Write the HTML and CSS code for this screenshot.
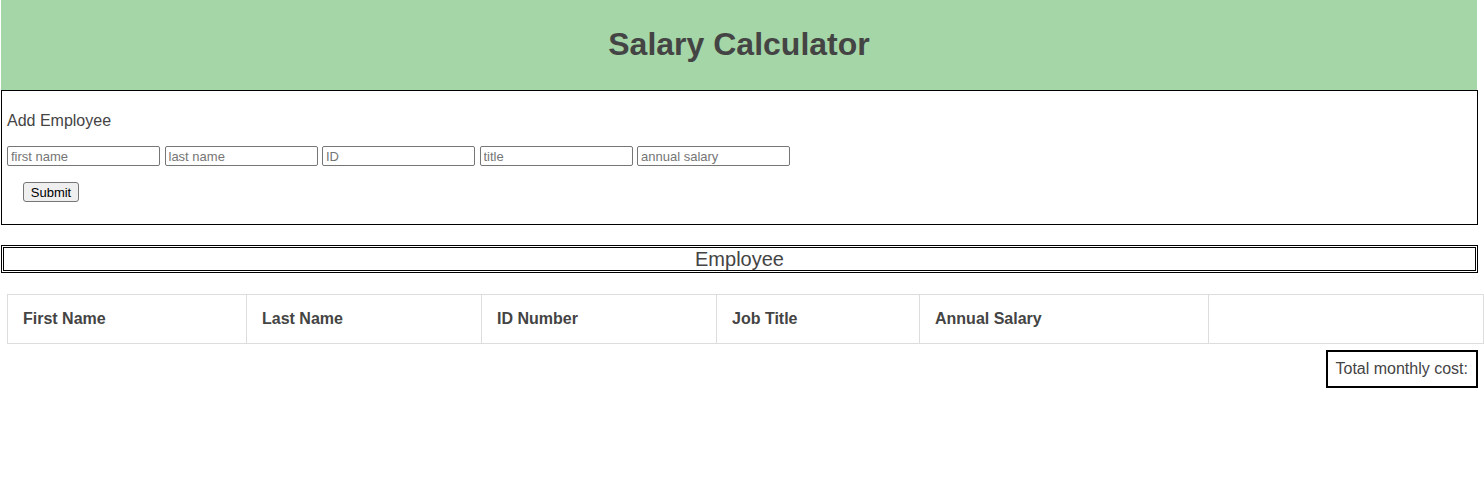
FILE: index.html
```html
<!DOCTYPE html>
<html lang="en">
<head>
<meta charset="utf-8">
<title>Salary Calculator</title>
<link rel="stylesheet" href="styles.css">
</head>
<body>
<div class="page">
  <header class="banner">
    <h1 class="title">Salary Calculator</h1>
  </header>
  <section class="add-box">
    <p class="add-label">Add Employee</p>
    <div class="inputs">
      <input class="field" type="text" placeholder="first name">
      <input class="field" type="text" placeholder="last name">
      <input class="field" type="text" placeholder="ID">
      <input class="field" type="text" placeholder="title">
      <input class="field" type="text" placeholder="annual salary">
    </div>
    <button class="submit" type="button">Submit</button>
  </section>
  <div class="emp-box">Employee</div>
  <table class="emp-table">
    <colgroup>
      <col class="c1"><col class="c2"><col class="c3"><col class="c4"><col class="c5"><col class="c6">
    </colgroup>
    <thead>
      <tr>
        <th>First Name</th>
        <th>Last Name</th>
        <th>ID Number</th>
        <th>Job Title</th>
        <th>Annual Salary</th>
        <th></th>
      </tr>
    </thead>
  </table>
  <div class="total-row">
    <div class="total">Total monthly cost:</div>
  </div>
</div>
</body>
</html>
```

FILE: styles.css
```css
html, body {
  margin: 0;
  padding: 0;
  background: #fff;
}
body {
  font-family: "Liberation Sans", Arial, sans-serif;
  color: #444;
  font-size: 16px;
}
.page {
  margin-left: 1px;
  width: 1477px;
}
.banner {
  background: #a5d6a7;
  height: 90px;
  box-sizing: border-box;
  padding-bottom: 2px;
  display: flex;
  align-items: center;
  justify-content: center;
  width: 1476px;
}
.title {
  margin: 0;
  font-size: 32px;
  font-weight: bold;
  color: #444;
}
.add-box {
  border: 1px solid #000;
  padding: 5px 5px 20px 5px;
  height: 135px;
  box-sizing: border-box;
}
.add-label {
  margin: 16px 0 16px 0;
  line-height: 18px;
}
.inputs {
  display: flex;
  gap: 4.5px;
}
.field {
  width: 153px;
  height: 20px;
  box-sizing: border-box;
  border: 1px solid #767676;
  border-radius: 2px;
  padding: 1px 3px;
  font-family: "Liberation Sans", Arial, sans-serif;
  font-size: 13px;
  color: #000;
  background: #fff;
  margin: 0;
}
.field::placeholder {
  color: #757575;
}
.submit {
  margin: 16px 0 0 16px;
  width: 56px;
  height: 20px;
  padding: 0;
  box-sizing: border-box;
  border: 1px solid #767676;
  border-radius: 3px;
  background: #efefef;
  font-family: "Liberation Sans", Arial, sans-serif;
  font-size: 13px;
  color: #000;
}
.emp-box {
  margin-top: 20px;
  border: 3px double #000;
  height: 28px;
  box-sizing: border-box;
  text-align: center;
  font-size: 20px;
  line-height: 22px;
  color: #444;
}
.emp-table {
  margin: 21px 0 0 6px;
  width: 1476px;
  border-collapse: collapse;
  table-layout: fixed;
}
.c1 { width: 239px; }
.c2 { width: 235px; }
.c3 { width: 235px; }
.c4 { width: 203px; }
.c5 { width: 289px; }
.c6 { width: 275px; }
.emp-table th {
  border: 1px solid #ddd;
  height: 48px;
  padding: 0 15px;
  text-align: left;
  font-weight: bold;
  font-size: 16px;
  color: #444;
}
.total-row {
  display: flex;
  justify-content: flex-end;
  margin-top: 6px;
}
.total {
  border: 2px solid #000;
  height: 38px;
  box-sizing: border-box;
  padding: 0 8px;
  display: flex;
  align-items: center;
  font-size: 16px;
  color: #444;
}
```
